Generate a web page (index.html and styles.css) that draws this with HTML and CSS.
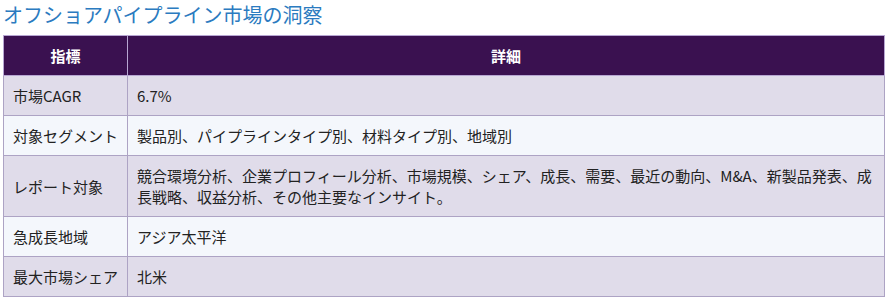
FILE: index.html
```html
<!DOCTYPE html>
<html lang="ja">
<head>
<meta charset="utf-8">
<title>オフショアパイプライン市場の洞察</title>
<link rel="stylesheet" href="styles.css">
</head>
<body>
<div class="wrap">
  <h2 class="title">オフショアパイプライン市場の洞察</h2>
  <table class="insights">
    <thead>
      <tr><th class="c1">指標</th><th>詳細</th></tr>
    </thead>
    <tbody>
      <tr><td class="c1">市場CAGR</td><td>6.7%</td></tr>
      <tr><td class="c1">対象セグメント</td><td>製品別、パイプラインタイプ別、材料タイプ別、地域別</td></tr>
      <tr><td class="c1">レポート対象</td><td>競合環境分析、企業プロフィール分析、市場規模、シェア、成長、需要、最近の動向、M&amp;A、新製品発表、成長戦略、収益分析、その他主要なインサイト。</td></tr>
      <tr><td class="c1">急成長地域</td><td>アジア太平洋</td></tr>
      <tr><td class="c1">最大市場シェア</td><td>北米</td></tr>
    </tbody>
  </table>
</div>
</body>
</html>
```
FILE: styles.css
```css
html, body {
  margin: 0;
  padding: 0;
  background: #ffffff;
}
body {
  font-family: "Noto Sans CJK JP", "Noto Sans", sans-serif;
  color: #222222;
}
.wrap {
  padding: 2px 3px;
}
.title {
  margin: 0 0 7px 0;
  font-size: 20px;
  line-height: 26px;
  font-weight: 400;
  color: #2b7bc0;
}
.insights {
  width: 882px;
  border-collapse: collapse;
  font-size: 15px;
  line-height: 21px;
}
.insights th,
.insights td {
  border: 1px solid #ada3c4;
  padding: 9px 9px;
  vertical-align: middle;
}
.insights th {
  background: #3a1150;
  color: #ffffff;
  font-weight: 700;
  text-align: center;
  border-color: #b7a6d2;
}
.insights td {
  text-align: left;
}
.insights .c1 {
  width: 104px;
  white-space: nowrap;
}
.insights tbody tr:nth-child(odd) td {
  background: #e0dcea;
}
.insights tbody tr:nth-child(even) td {
  background: #f4f7fc;
}
```
